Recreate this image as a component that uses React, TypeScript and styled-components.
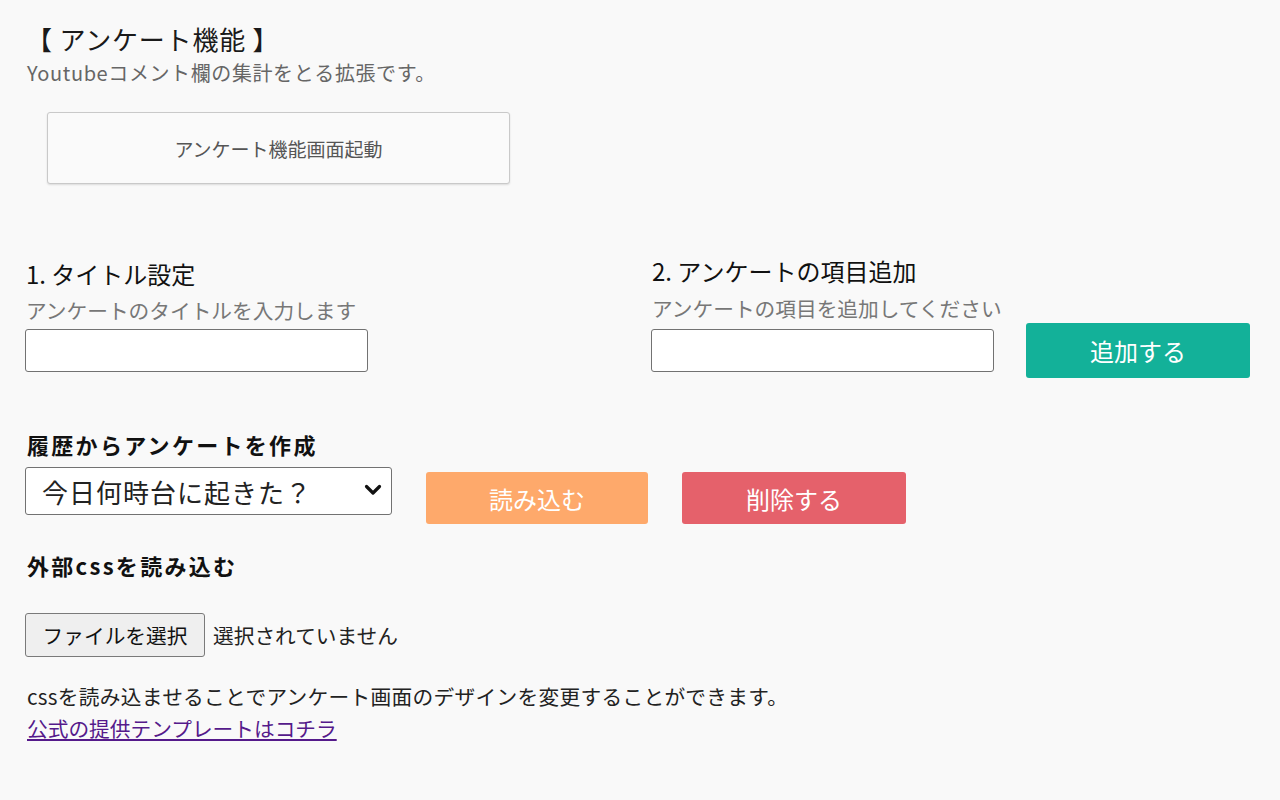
import React, { useState } from 'react'
import styled, { createGlobalStyle } from 'styled-components'

const GlobalStyle = createGlobalStyle`
  body {
    margin: 0;
    background: #f9f9f9;
    font-family: "Noto Sans CJK JP", "Noto Sans", sans-serif;
    color: #222;
  }
`

const App = () => {
  const [title, setTitle] = useState('')
  const [item, setItem] = useState('')
  const [history, setHistory] = useState('wake')

  return (
    <>
      <GlobalStyle />
      <Page>
        <Title>【 アンケート機能 】</Title>
        <Lead>Youtubeコメント欄の集計をとる拡張です。</Lead>
        <LaunchButton>アンケート機能画面起動</LaunchButton>

        <Steps>
          <Step $top={3}>
            <StepTitle>1. タイトル設定</StepTitle>
            <StepNote $gap={9}>アンケートのタイトルを入力します</StepNote>
            <TextInput
              $top={6}
              value={title}
              onChange={(e) => setTitle(e.target.value)}
            />
          </Step>
          <Step $top={0}>
            <StepTitle>2. アンケートの項目追加</StepTitle>
            <StepNote $gap={10}>アンケートの項目を追加してください</StepNote>
            <AddRow>
              <TextInput
                $top={0}
                value={item}
                onChange={(e) => setItem(e.target.value)}
              />
              <ActionButton $color="#13b199" $width={224} $height={55}>
                追加する
              </ActionButton>
            </AddRow>
          </Step>
        </Steps>

        <SectionTitle $top={54}>履歴からアンケートを作成</SectionTitle>
        <HistoryRow>
          <SelectWrap>
            <Select value={history} onChange={(e) => setHistory(e.target.value)}>
              <option value="wake">今日何時台に起きた？</option>
            </Select>
            <Chevron width="18" height="12" viewBox="0 0 18 12">
              <path
                d="M2.5 2.5 L9 9 L15.5 2.5"
                fill="none"
                stroke="#111"
                strokeWidth="3.2"
                strokeLinecap="round"
                strokeLinejoin="round"
              />
            </Chevron>
          </SelectWrap>
          <ActionButton $color="#fea96b" $width={222} $height={52} $offset={5}>
            読み込む
          </ActionButton>
          <ActionButton $color="#e5616b" $width={224} $height={52} $offset={5}>
            削除する
          </ActionButton>
        </HistoryRow>

        <SectionTitle $top={29}>外部cssを読み込む</SectionTitle>
        <FileRow>
          <FileButton>ファイルを選択</FileButton>
          <FileStatus>選択されていません</FileStatus>
        </FileRow>

        <Notes>
          <NoteText>
            cssを読み込ませることでアンケート画面のデザインを変更することができます。
          </NoteText>
          <br />
          <TemplateLink href="#">公式の提供テンプレートはコチラ</TemplateLink>
        </Notes>
      </Page>
    </>
  )
}

export default App

const Page = styled.div`
  padding: 23px 25px 40px 25px;
  display: flex;
  flex-direction: column;
  align-items: flex-start;
`
const Title = styled.h1`
  margin: 0 0 0 1px;
  font-size: 26px;
  font-weight: normal;
  letter-spacing: 0.8px;
  line-height: 1.2;
  color: #1a1a1a;
`
const Lead = styled.p`
  margin: 7px 0 0 2px;
  font-size: 20px;
  letter-spacing: 0.6px;
  line-height: 1.2;
  color: #666;
`
const LaunchButton = styled.button`
  margin: 27px 0 0 22px;
  width: 463px;
  height: 72px;
  background: #fafafa;
  border: 1px solid #c9c9c9;
  border-radius: 3px;
  box-shadow: 0 1px 2px rgba(0, 0, 0, 0.12);
  font-family: inherit;
  font-size: 19px;
  color: #555;
  cursor: pointer;
`
const Steps = styled.div`
  margin-top: 73px;
  display: grid;
  grid-template-columns: 626px 1fr;
  width: 100%;
`
const Step = styled.div<{ $top: number }>`
  padding-top: ${(p) => p.$top}px;
  display: flex;
  flex-direction: column;
  align-items: flex-start;
`
const StepTitle = styled.h2`
  margin: 0 0 0 1px;
  font-size: 24px;
  font-weight: normal;
  line-height: 1.2;
  color: #111;
`
const StepNote = styled.p<{ $gap: number }>`
  margin: ${(p) => p.$gap}px 0 0 1px;
  font-size: 20.7px;
  line-height: 1.2;
  color: #777;
`
const TextInput = styled.input<{ $top: number }>`
  margin-top: ${(p) => p.$top}px;
  box-sizing: border-box;
  width: 343px;
  height: 43px;
  background: #fff;
  border: 1px solid #727272;
  border-radius: 3px;
  font-family: inherit;
  font-size: 20px;
  padding: 0 8px;
  outline: none;
`
const AddRow = styled.div`
  margin-top: 2px;
  display: flex;
  align-items: center;
  gap: 32px;
`
const ActionButton = styled.button<{
  $color: string
  $width: number
  $height: number
  $offset?: number
}>`
  margin-top: ${(p) => p.$offset ?? 0}px;
  width: ${(p) => p.$width}px;
  height: ${(p) => p.$height}px;
  background: ${(p) => p.$color};
  color: #fff;
  border: none;
  border-radius: 3px;
  font-family: inherit;
  font-size: 24px;
  cursor: pointer;
`
const SectionTitle = styled.h3<{ $top: number }>`
  margin: ${(p) => p.$top}px 0 0 2px;
  font-size: 22px;
  font-weight: bold;
  letter-spacing: 2.3px;
  line-height: 1.15;
  color: #111;
`
const HistoryRow = styled.div`
  margin-top: 10px;
  display: flex;
  align-items: flex-start;
  gap: 34px;
`
const SelectWrap = styled.div`
  position: relative;
  width: 367px;
  height: 48px;
`
const Select = styled.select`
  appearance: none;
  box-sizing: border-box;
  width: 100%;
  height: 100%;
  padding: 0 40px 0 16px;
  background: #fff;
  border: 1px solid #727272;
  border-radius: 3px;
  font-family: inherit;
  font-size: 26px;
  letter-spacing: 1px;
  color: #222;
  outline: none;
`
const Chevron = styled.svg`
  position: absolute;
  right: 10px;
  top: 17px;
  pointer-events: none;
`
const FileRow = styled.div`
  margin-top: 35px;
  display: flex;
  align-items: center;
  gap: 8px;
`
const FileButton = styled.button`
  box-sizing: border-box;
  width: 180px;
  height: 44px;
  background: #efefef;
  border: 1px solid #7a7a7a;
  border-radius: 3px;
  font-family: inherit;
  font-size: 20.7px;
  color: #111;
  padding: 0;
  cursor: pointer;
`
const FileStatus = styled.span`
  font-size: 20.7px;
  color: #222;
`
const Notes = styled.p`
  margin: 23px 0 0 2px;
  font-size: 20.7px;
  line-height: 32px;
  color: #222;
`
const NoteText = styled.span`
  letter-spacing: 0.3px;
`
const TemplateLink = styled.a`
  color: #551a8b;
  text-decoration: underline;
`
